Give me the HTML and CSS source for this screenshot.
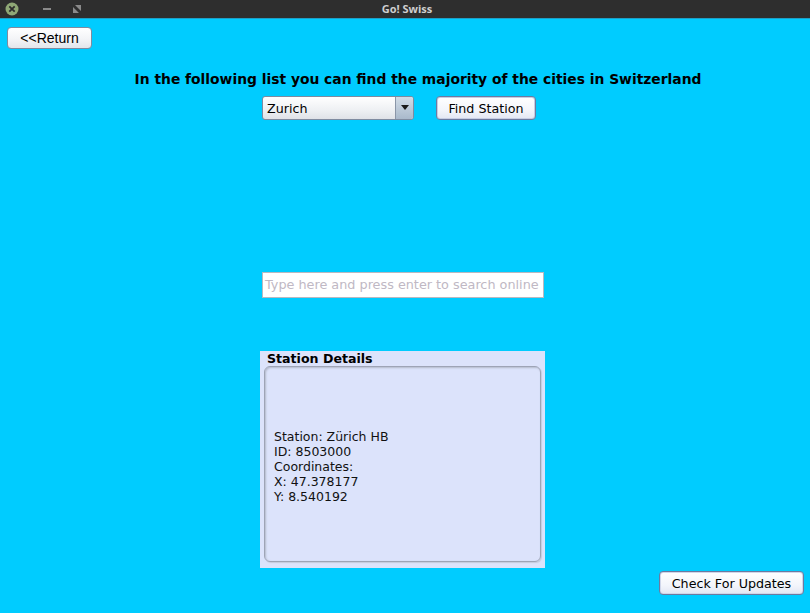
FILE: index.html
```html
<!DOCTYPE html>
<html>
<head>
<meta charset="utf-8">
<link rel="stylesheet" href="styles.css">
</head>
<body>
<div class="window">
  <div class="titlebar">
    <div class="controls">
      <span class="ctl-close"><svg width="14" height="14" viewBox="0 0 14 14"><circle cx="7" cy="7" r="6.5" fill="#8fa876"/><path d="M4.3 4.3 L9.7 9.7 M9.7 4.3 L4.3 9.7" stroke="#2d2d2d" stroke-width="1.8"/></svg></span>
      <span class="ctl-min"><svg width="10" height="10" viewBox="0 0 10 10"><rect x="1" y="4" width="8" height="2" fill="#8a8a8a"/></svg></span>
      <span class="ctl-max"><svg width="10" height="10" viewBox="0 0 10 10"><path d="M3 1 H9 V7 Z M1 3 L7 9 H1 Z" fill="#8a8a8a"/></svg></span>
    </div>
    <div class="title">Go! Swiss</div>
  </div>
  <div class="content">
    <div class="top-row">
      <button class="btn btn-return">&lt;&lt;Return</button>
    </div>
    <h1 class="heading">In the following list you can find the majority of the cities in Switzerland</h1>
    <div class="select-row">
      <div class="combo">
        <span class="combo-text">Zurich</span>
        <span class="combo-arrow"><svg width="8" height="6" viewBox="0 0 8 6"><path d="M0 0 H8 L4 5 Z" fill="#1a1a1a"/></svg></span>
      </div>
      <button class="btn btn-find">Find Station</button>
    </div>
    <div class="search-row">
      <div class="search">Type here and press enter to search online</div>
    </div>
    <div class="details-row">
      <div class="details">
        <div class="details-title">Station Details</div>
        <div class="details-box">
          <div class="line">Station: Zürich HB</div>
          <div class="line">ID: 8503000</div>
          <div class="line">Coordinates:</div>
          <div class="line">X: 47.378177</div>
          <div class="line">Y: 8.540192</div>
        </div>
      </div>
    </div>
    <div class="bottom-row">
      <button class="btn btn-update">Check For Updates</button>
    </div>
  </div>
</div>
</body>
</html>
```

FILE: styles.css
```css
html, body {
  margin: 0;
  padding: 0;
}
body {
  width: 810px;
  height: 613px;
  overflow: hidden;
  background: #00ccff;
  font-family: "DejaVu Sans", sans-serif;
  font-size: 13px;
  color: #000;
}
.window {
  display: flex;
  flex-direction: column;
  height: 613px;
}
.titlebar {
  height: 18px;
  background: #2e2e2e;
  display: flex;
  align-items: center;
  position: relative;
  border-bottom: 1px solid #1d9fc7;
}
.controls {
  display: flex;
  align-items: center;
  padding-left: 5px;
}
.ctl-close { width: 14px; height: 14px; display: flex; }
.ctl-min { margin-left: 23px; display: flex; }
.ctl-max { margin-left: 20px; display: flex; }
.title {
  position: absolute;
  left: 0;
  right: 0;
  top: 0;
  height: 18px;
  line-height: 17px;
  text-align: center;
  font-family: "Open Sans", "DejaVu Sans", sans-serif;
  font-weight: bold;
  font-size: 11px;
  color: #cfcfcf;
  padding-left: 4px;
}
.content {
  flex: 1;
  display: flex;
  flex-direction: column;
}
.top-row {
  padding: 8px 0 0 7px;
  display: flex;
}
.btn {
  background: linear-gradient(#ffffff, #f3f4f7 55%, #e3e5ea);
  border: 1px solid #7f8ba0;
  border-radius: 4px;
  font-family: "DejaVu Sans", sans-serif;
  font-size: 12.7px;
  color: #000;
  padding: 0;
  margin: 0;
  box-sizing: border-box;
}
.btn-return {
  width: 85px;
  height: 22px;
  font-family: "Liberation Sans", sans-serif;
  font-size: 14px;
}
.heading {
  margin: 22px 0 0 0;
  font-size: 13.85px;
  font-weight: bold;
  text-align: center;
  line-height: 17px;
  padding-left: 26px;
}
.select-row {
  display: flex;
  margin-top: 8px;
  padding-left: 262px;
  gap: 22px;
}
.combo {
  width: 152px;
  height: 24px;
  box-sizing: border-box;
  border: 1px solid #7f8ba0;
  border-radius: 3px;
  background: linear-gradient(#ffffff, #eef0f3 60%, #dfe2e7);
  display: flex;
  align-items: center;
  overflow: hidden;
}
.combo-text {
  flex: 1;
  padding-left: 4px;
  font-size: 12.7px;
}
.combo-arrow {
  width: 17px;
  height: 100%;
  border-left: 1px solid #8a96a8;
  background: linear-gradient(#d2dce7, #a9b9cb);
  display: flex;
  align-items: center;
  justify-content: center;
}
.btn-find {
  width: 100px;
  height: 24px;
  border-color: #6d7aa0;
  box-shadow: inset 0 0 0 1px #c6cde3;
  background: linear-gradient(#ffffff, #f3f5fb 60%, #e3e7f3);
}
.search-row {
  margin-top: 152px;
  padding-left: 262px;
  display: flex;
}
.search {
  width: 282px;
  height: 26px;
  box-sizing: border-box;
  background: #fff;
  border: 1px solid #b8b8c0;
  color: #c0b8c4;
  font-size: 12.8px;
  line-height: 24px;
  padding-left: 2px;
  white-space: nowrap;
  overflow: hidden;
}
.details-row {
  margin-top: 53px;
  padding-left: 260px;
  display: flex;
}
.details {
  width: 285px;
  height: 217px;
  background: #dce3fb;
  box-sizing: border-box;
  padding: 0 4px 6px 4px;
  display: flex;
  flex-direction: column;
}
.details-title {
  font-weight: bold;
  font-size: 12.6px;
  line-height: 15px;
  padding-left: 3px;
}
.details-box {
  flex: 1;
  border: 1px solid #9ea4b6;
  border-radius: 6px;
  box-shadow: inset 1px 1px 2px #b4bacb, 1px 1px 1px #c5cbdd;
  padding: 62px 0 0 9px;
  font-size: 12.5px;
  color: #111;
}
.line {
  line-height: 15px;
}
.bottom-row {
  display: flex;
  justify-content: flex-end;
  padding-right: 6px;
  margin-top: 3px;
}
.btn-update {
  width: 145px;
  height: 24px;
  border-color: #6d7aa0;
  box-shadow: inset 0 0 0 1px #d0d6ea;
  background: linear-gradient(#ffffff, #f3f5fb 60%, #e3e7f3);
}
```
